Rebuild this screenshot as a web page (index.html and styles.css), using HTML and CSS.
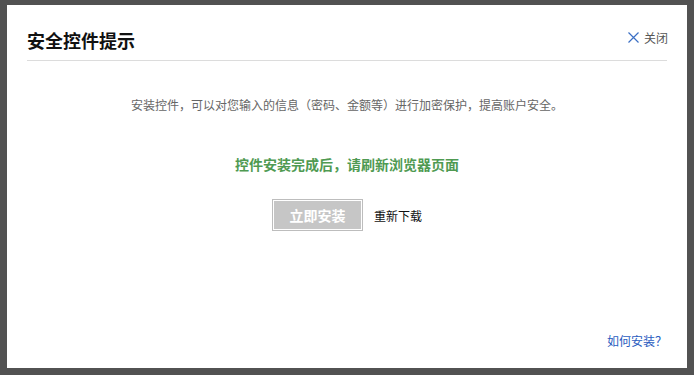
FILE: index.html
```html
<!DOCTYPE html>
<html lang="zh-CN">
<head>
    <meta charset="UTF-8">
    <title>安全控件提示</title>
    <link rel="stylesheet" href="styles.css">
</head>
<body>
    <div class="dialog">
        <div class="dialog-head">
            <h2>安全控件提示</h2>
            <a class="close" href="#">
                <svg width="11" height="11" viewBox="0 0 11 11"><path d="M0.5 0.5 L10.5 10.5 M10.5 0.5 L0.5 10.5" stroke="#3b6fc4" stroke-width="1.2" fill="none"/></svg>
                关闭
            </a>
        </div>
        <div class="dialog-body">
            <p class="tip">安装控件，可以对您输入的信息（密码、金额等）进行加密保护，提高账户安全。</p>
            <p class="done">控件安装完成后，请刷新浏览器页面</p>
            <div class="actions">
                <button class="install" type="button">立即安装</button>
                <a class="reload" href="#">重新下载</a>
            </div>
        </div>
        <div class="dialog-foot">
            <a class="help" href="#">如何安装？</a>
        </div>
    </div>
</body>
</html>
```

FILE: styles.css
```css
body {
    margin: 0;
    background-color: #525252;
    font-family: "Noto Sans CJK SC", "Liberation Sans", sans-serif;
}
.dialog {
    margin: 5px 7px 7px 7px;
    height: 363px;
    background: #fff;
    display: flex;
    flex-direction: column;
    padding: 0 20px;
}
.dialog-head {
    display: flex;
    align-items: center;
    justify-content: space-between;
    height: 40px;
    padding-top: 15px;
    border-bottom: 1px solid #dcdcdc;
}
.dialog-head h2 {
    margin: 0;
    font-size: 18px;
    font-weight: bold;
    color: #111;
}
.close {
    display: flex;
    align-items: center;
    gap: 5px;
    margin-top: -6px;
    margin-right: -1px;
    font-size: 12px;
    color: #555;
    text-decoration: none;
}
.dialog-body {
    text-align: center;
}
.tip {
    margin: 34px 0 0;
    font-size: 12px;
    line-height: 20px;
    color: #666;
}
.done {
    margin: 39px 0 0;
    font-size: 14px;
    line-height: 20px;
    font-weight: bold;
    color: #4f9a52;
}
.actions {
    display: flex;
    justify-content: center;
    align-items: center;
    gap: 11px;
    margin-top: 25px;
}
.install {
    width: 91px;
    height: 32px;
    background-color: #c6c6c6;
    border: 1px solid #bdbdbd;
    box-shadow: inset 0 0 0 1px #fff;
    color: #fff;
    font-family: inherit;
    font-size: 14px;
    font-weight: bold;
    padding: 0;
}
.reload {
    font-size: 12px;
    color: #111;
    text-decoration: none;
}
.dialog-foot {
    margin-top: auto;
    padding-bottom: 17px;
    text-align: right;
}
.help {
    font-size: 12px;
    line-height: 20px;
    color: #2a5cc0;
    text-decoration: none;
}
```
